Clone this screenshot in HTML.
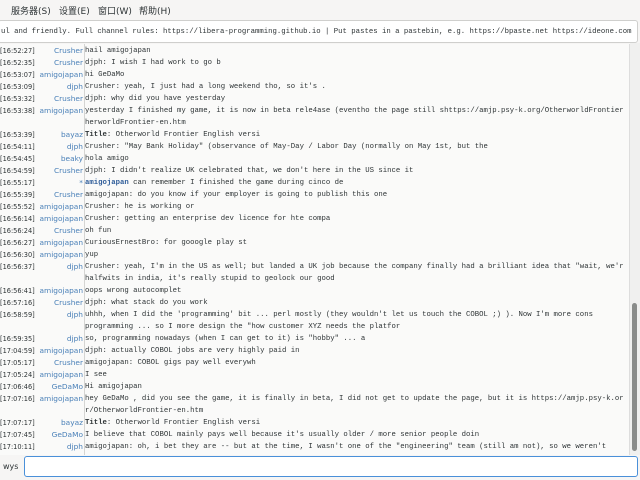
<!DOCTYPE html>
<html><head><meta charset="utf-8"><style>
*{margin:0;padding:0;box-sizing:border-box}
body{width:640px;height:480px;overflow:hidden;background:#f6f5f4;font-family:"DejaVu Sans","Liberation Sans","Noto Sans CJK SC",sans-serif;position:relative}
#menu{position:absolute;left:0;top:0;width:640px;height:20px;font-size:9px;color:#2e3436}
#menu span{position:absolute;top:4px}
#topic{position:absolute;left:-2px;top:20px;width:640px;height:23px;background:#fff;border:1px solid #cfcfcd;border-radius:3px;font-family:"Liberation Mono",monospace;font-size:7.3px;color:#2e3436;white-space:nowrap;overflow:hidden;line-height:22px;padding-left:2px}
#chat{position:absolute;left:0;top:44px;width:630px;height:411px;background:#fafaf9;border-right:1px solid #ddd;overflow:hidden}
#sep{position:absolute;left:84px;top:0;width:1px;height:412px;background:#d5d5d3}
.r{position:absolute;left:0;height:12px;width:630px;white-space:nowrap;line-height:12px}
.t{position:absolute;left:0;font-size:6.6px;color:#2e3436}
.n{position:absolute;right:547px;font-size:7.4px;color:#4a80b8}
.m{position:absolute;left:85px;font-family:"Liberation Mono",monospace;font-size:7.3px;color:#2e3436}
.m b{color:#2e5c99;font-weight:bold}
.m i{font-style:normal;font-weight:bold}
#sb{position:absolute;left:630px;top:43px;width:10px;height:412px;background:#f0f0ef}
#thumb{position:absolute;left:632px;top:303px;width:5px;height:148px;background:#8a8c8a;border-radius:3px}
#nick{position:absolute;left:3px;top:462px;font-size:8px;color:#2e3436}
#input{position:absolute;left:24px;top:456px;width:614px;height:21px;background:#fff;border:1px solid #4a90d9;border-radius:3px}
</style></head><body>
<div id="menu"><span style="left:11px">服务器(S)</span><span style="left:59px">设置(E)</span><span style="left:98px">窗口(W)</span><span style="left:139px">帮助(H)</span></div>
<div id="topic">ul and friendly. Full channel rules: https://libera-programming.github.io | Put pastes in a pastebin, e.g. https://bpaste.net https://ideone.com</div>
<div id="chat"><div id="sep"></div>
<div class="r" style="top:1px"><span class="t">[16:52:27]</span><span class="n">Crusher</span><span class="m">hail amigojapan</span></div>
<div class="r" style="top:13px"><span class="t">[16:52:35]</span><span class="n">Crusher</span><span class="m">djph: I wish I had work to go b</span></div>
<div class="r" style="top:25px"><span class="t">[16:53:07]</span><span class="n">amigojapan</span><span class="m">hi GeDaMo</span></div>
<div class="r" style="top:37px"><span class="t">[16:53:09]</span><span class="n">djph</span><span class="m">Crusher: yeah, I just had a long weekend tho, so it's .</span></div>
<div class="r" style="top:49px"><span class="t">[16:53:32]</span><span class="n">Crusher</span><span class="m">djph: why did you have yesterday</span></div>
<div class="r" style="top:61px"><span class="t">[16:53:38]</span><span class="n">amigojapan</span><span class="m">yesterday I finished my game, it is now in beta rele4ase (eventho the page still shttps://amjp.psy-k.org/OtherworldFrontier</span></div>
<div class="r" style="top:73px"><span class="m">herworldFrontier-en.htm</span></div>
<div class="r" style="top:85px"><span class="t">[16:53:39]</span><span class="n">bayaz</span><span class="m"><i>Title</i>: Otherworld Frontier English versi</span></div>
<div class="r" style="top:97px"><span class="t">[16:54:11]</span><span class="n">djph</span><span class="m">Crusher: "May Bank Holiday" (observance of May-Day / Labor Day (normally on May 1st, but the</span></div>
<div class="r" style="top:109px"><span class="t">[16:54:45]</span><span class="n">beaky</span><span class="m">hola amigo</span></div>
<div class="r" style="top:121px"><span class="t">[16:54:59]</span><span class="n">Crusher</span><span class="m">djph: I didn't realize UK celebrated that, we don't here in the US since it</span></div>
<div class="r" style="top:133px"><span class="t">[16:55:17]</span><span class="n">*</span><span class="m"><b>amigojapan</b> can remember I finished the game during cinco de</span></div>
<div class="r" style="top:145px"><span class="t">[16:55:39]</span><span class="n">Crusher</span><span class="m">amigojapan: do you know if your employer is going to publish this one</span></div>
<div class="r" style="top:157px"><span class="t">[16:55:52]</span><span class="n">amigojapan</span><span class="m">Crusher: he is working or</span></div>
<div class="r" style="top:169px"><span class="t">[16:56:14]</span><span class="n">amigojapan</span><span class="m">Crusher: getting an enterprise dev licence for hte compa</span></div>
<div class="r" style="top:181px"><span class="t">[16:56:24]</span><span class="n">Crusher</span><span class="m">oh fun</span></div>
<div class="r" style="top:193px"><span class="t">[16:56:27]</span><span class="n">amigojapan</span><span class="m">CuriousErnestBro: for gooogle play st</span></div>
<div class="r" style="top:205px"><span class="t">[16:56:30]</span><span class="n">amigojapan</span><span class="m">yup</span></div>
<div class="r" style="top:217px"><span class="t">[16:56:37]</span><span class="n">djph</span><span class="m">Crusher: yeah, I'm in the US as well; but landed a UK job because the company finally had a brilliant idea that "wait, we'r</span></div>
<div class="r" style="top:229px"><span class="m">halfwits in india, it's really stupid to geolock our good</span></div>
<div class="r" style="top:241px"><span class="t">[16:56:41]</span><span class="n">amigojapan</span><span class="m">oops wrong autocomplet</span></div>
<div class="r" style="top:253px"><span class="t">[16:57:16]</span><span class="n">Crusher</span><span class="m">djph: what stack do you work</span></div>
<div class="r" style="top:265px"><span class="t">[16:58:59]</span><span class="n">djph</span><span class="m">uhhh, when I did the 'programming' bit ... perl mostly (they wouldn't let us touch the COBOL ;) ).  Now I'm more cons</span></div>
<div class="r" style="top:277px"><span class="m">programming ... so I more design the "how customer XYZ needs the platfor</span></div>
<div class="r" style="top:289px"><span class="t">[16:59:35]</span><span class="n">djph</span><span class="m">so, programming nowadays (when I can get to it) is "hobby" ... a</span></div>
<div class="r" style="top:301px"><span class="t">[17:04:59]</span><span class="n">amigojapan</span><span class="m">djph: actually COBOL jobs are very highly paid in</span></div>
<div class="r" style="top:313px"><span class="t">[17:05:17]</span><span class="n">Crusher</span><span class="m">amigojapan: COBOL gigs pay well everywh</span></div>
<div class="r" style="top:325px"><span class="t">[17:05:24]</span><span class="n">amigojapan</span><span class="m">I see</span></div>
<div class="r" style="top:337px"><span class="t">[17:06:46]</span><span class="n">GeDaMo</span><span class="m">Hi amigojapan</span></div>
<div class="r" style="top:349px"><span class="t">[17:07:16]</span><span class="n">amigojapan</span><span class="m">hey GeDaMo , did you see the game, it is finally in beta, I did not get to update the page, but it is https://amjp.psy-k.or</span></div>
<div class="r" style="top:361px"><span class="m">r/OtherworldFrontier-en.htm</span></div>
<div class="r" style="top:373px"><span class="t">[17:07:17]</span><span class="n">bayaz</span><span class="m"><i>Title</i>: Otherworld Frontier English versi</span></div>
<div class="r" style="top:385px"><span class="t">[17:07:45]</span><span class="n">GeDaMo</span><span class="m">I believe that COBOL mainly pays well because it's usually older / more senior people doin</span></div>
<div class="r" style="top:397px"><span class="t">[17:10:11]</span><span class="n">djph</span><span class="m">amigojapan: oh, i bet they are -- but at the time, I wasn't one of the "engineering" team (still am not), so we weren't</span></div>
</div>
<div id="sb"></div><div id="thumb"></div>
<div id="nick">wys</div>
<div id="input"></div>
</body></html>
